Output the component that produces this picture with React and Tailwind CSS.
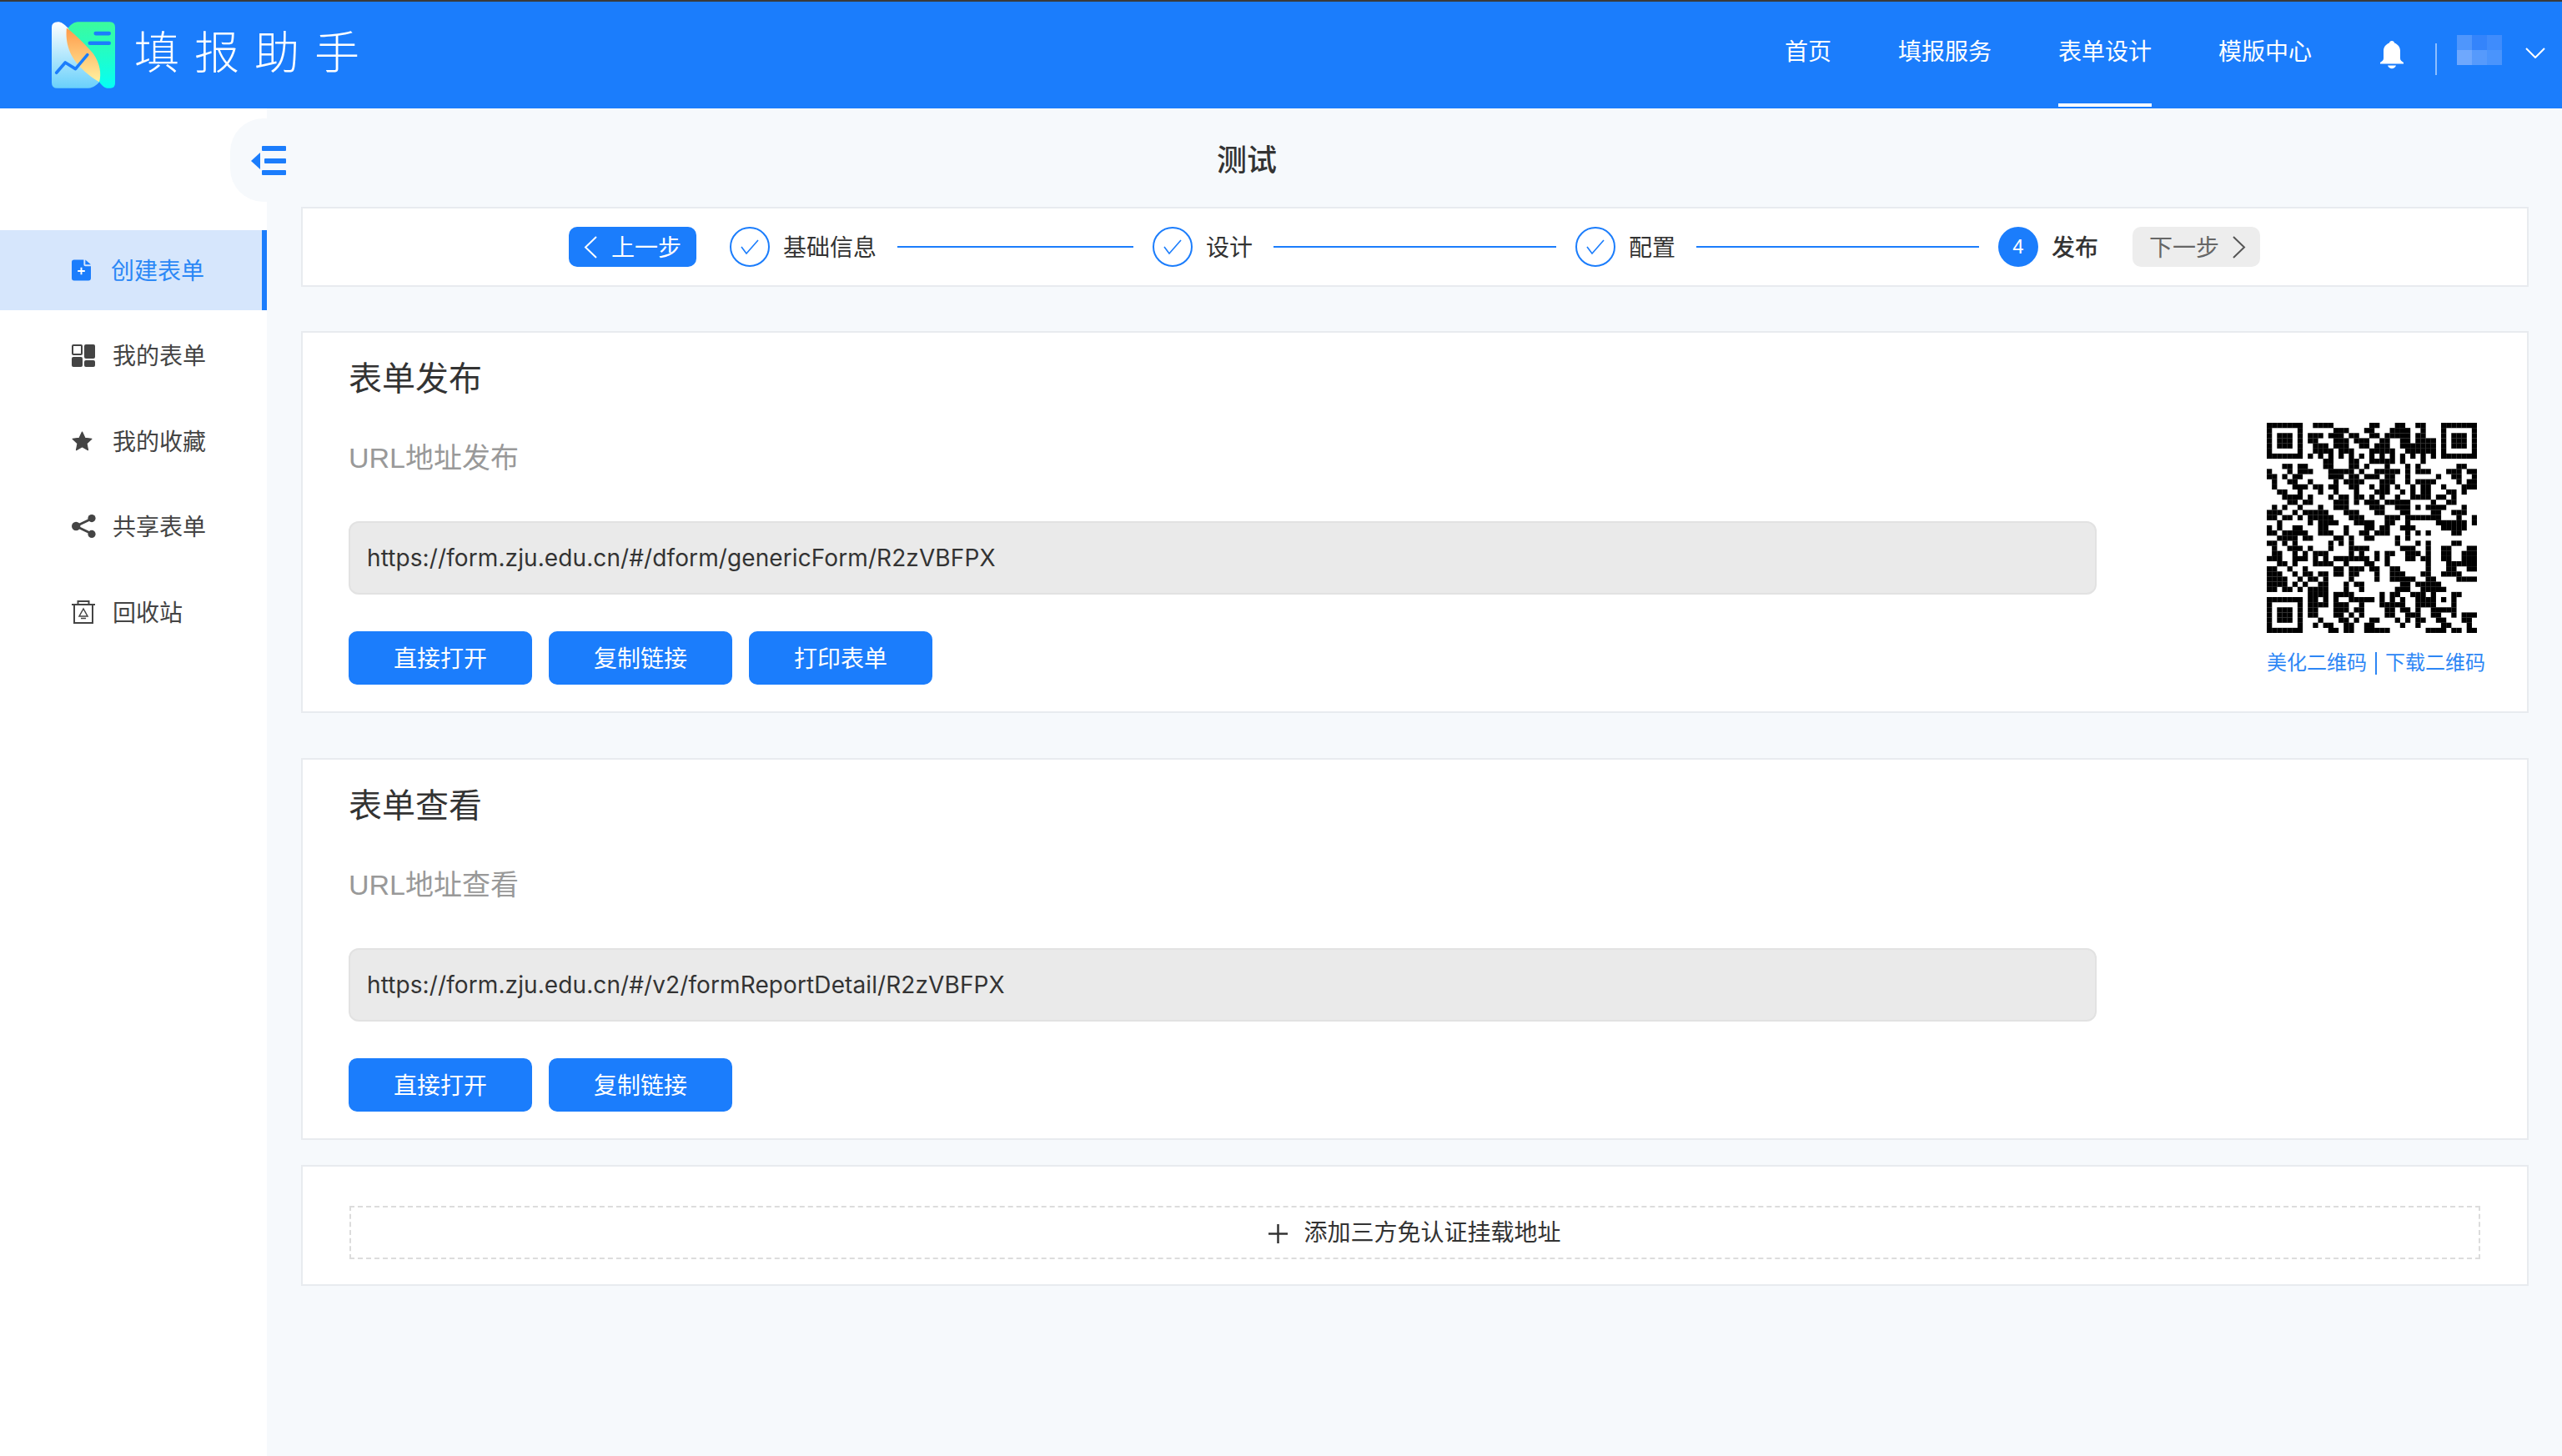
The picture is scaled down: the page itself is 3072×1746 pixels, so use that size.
import { Fragment } from "react";

const QR_ROWS = [
  "1111111 00 1111 0000000 11 000 11 00 11 000 1111111",
  "1000001 000000 111 000 11 000 1111 00 1 000 1000001",
  "1011101 0 111 0 111 0 11 00 11 0 11111 0 11 000 1011101",
  "1011101 0 11 000 111 0 111 00 11 00 11 0 1111 0 1011101",
  "1011101 00 111 0 111 00 11 0 111 00 1111111 0 1011101",
  "1000001 00 1111 0 111 000 11111 00 111111 0 1000001",
  "1111111 0 1010101010101010101010101 0 1111111",
  "00000000000 11 000 11 00 11111 0 1 000 1 0000000000",
  "000 11 0 11 000 11 000 11 0 1 000 1 000 1 0 1 0000000 11 00",
  "1 000 1 0 111 000 11111 0 1 00 11111 0 1 0 111 000 111 0 11",
  "11 0 1 0 11 00000 111 0 11 0 111 0 11 00 1 00000 1 00 11 00 1",
  "0 1 00 11 00 1 0000 1 0 1111 000 111 00 1 0 1111 0000 1 0 11",
  "0 1 000 111 0 11 0 11 00 11 00 1 0 11 0 1 00 1 0 11 00 1 000 111",
  "00 11 00 1 000 1 00 1 000 1 000 111 00 1 0 1 0 11 000 11 0 1 00",
  "000 1111 0 1 000 1 0 11 0 11 0 1 0 1 00 1 00 1111 0 11 0 1 0000",
  "0000 11 0 11 0000 111 0 1 0 111 0 11111 0000 1 00 11 0000",
  "0 1 0 1 00 1 000 1 00 111 0000 111 00 111 0 1 0 1111 000 1 00",
  "111 00 1 0 11111 000 111 000 11 000 11 0000 11 00 111 00",
  "11 0 11 0 1 0 11111 000 111 0000 111 0 1111111 000 1 00 1",
  "00 1 00000 1 0 1111 000 1111 00 11 00 1 00000 111111 0 1",
  "1 0 1 00 11 000 11 000 1 000 11 0 11 00 111 00000 11111 00",
  "11 0 11111 00 111 00 1 00 11 0 111 000 1 0 1 0 1 0000 11 000",
  "00 1111 0 11 0000 11 0 1 00 11 0000 1 0 1 0000000000000",
  "11 0 1 0 1 000000 1 0 1 0 1 00000000 1 000 1 0 1 0000 11 000",
  "0 1 00 111 0 1 000 1 000 1111 000000 111 00 1 00 11 000 11",
  "0 11 00 1 0 1 0 111 0000 1 0 1 00 1 0 11 00 111 0 1 00 11 00 111",
  "111 00 111 0 1 0 1 0 1111111 0 1 0 1 000 11 0 11 00 11 00 111",
  "00 11 0 1 000 1111 00 1 000 11 00 1 0000000 1 000 111111",
  "11 00 1 00 1 00000 11 0 111 0 11 00 11 00000 1 000 11 00 11",
  "111 00 1 0 11 0 11 0 11 0 11 000 1 00 111 000 11 00 1111 000",
  "1111 00 1 0 11 0 1 0000 1 0000 1 00 11111 00 11 0000 1111",
  "1111 0 1 0 1 00 11 000 1 0 11 0000000 11 0 11111 0000000",
  "11 0 11 0 1 0 1111 000 1 00 1 000000 111 00 11111 00 0000",
  "00000000 1111 0 1111 00000 1 0 11 00 111 0 1 000 1 1 000",
  "1111111 0 11 0 1 0 1 00 11111 0 1 0 1 0 1 00 111 1 0 1 0 1 0000",
  "1000001 0 1111 0 111 00 1 000 11111 00 111 1 000 1 0000",
  "1011101 0 11 000 111 0 11 0000 11 0 11 0 1 00 11111 0000",
  "1011101 0 11 000 11 0 1 0 1 0000 11 00 111 00 11 00 1 0 111",
  "1011101 000 1 000 11 0 1 00 11 000 1 0 1 0 11 00 11 000 11 0",
  "1000001 0 0 1 0 11 00 11 00 11 00000 1 00 1 0000 11 000 1 0",
  "1111111 00000 11 0 11 00 11111 0000000 1111 0 11 0 11",
].map((row) => row.replace(/ /g, ""));

const NAV = ["首页", "填报服务", "表单设计", "模版中心"];

function Logo() {
  return (
    <svg viewBox="0 0 229 240" className="w-[76px] h-[80px]">
      <defs>
        <linearGradient id="logoLeft" x1="0" y1="0" x2="0" y2="1">
          <stop offset="0" stopColor="#ffffff" />
          <stop offset="1" stopColor="#69d0fb" />
        </linearGradient>
        <linearGradient id="logoRight" x1="0" y1="0" x2="0" y2="1">
          <stop offset="0" stopColor="#3cfb9c" />
          <stop offset="1" stopColor="#05fff5" />
        </linearGradient>
        <linearGradient id="logoLeaf" x1="0" y1="0" x2="0" y2="1">
          <stop offset="0" stopColor="#ff9a4a" />
          <stop offset="1" stopColor="#fff19f" />
        </linearGradient>
      </defs>
      <path
        d="M22 0C35 0 45 8 59 22L172 217C160 232 145 240 125 240H20Q0 240 0 220V20Q0 0 22 0Z"
        fill="url(#logoLeft)"
      />
      <path
        d="M59 22C70 8 80 0 100 0H210Q229 0 229 20V222Q229 240 212 240H205C190 240 180 228 172 217Z"
        fill="url(#logoRight)"
      />
      <path
        d="M54 22C50 60 55 115 105 165C130 190 150 205 172 217C180 190 175 150 150 115C125 85 90 50 54 22Z"
        fill="url(#logoLeaf)"
      />
      <path
        d="M17 184L49 147L86 170L129 119"
        fill="none"
        stroke="#1b7dfc"
        strokeWidth="11"
        strokeLinecap="round"
        strokeLinejoin="round"
      />
      <path
        d="M159 42H207M138 77H207"
        fill="none"
        stroke="#1b7dfc"
        strokeWidth="14"
        strokeLinecap="round"
      />
    </svg>
  );
}

function QrCode() {
  return (
    <svg viewBox="0 0 41 41" className="w-[252px] h-[252px] block">
      {QR_ROWS.map((row, y) =>
        row.split("").map((cell, x) =>
          cell === "1" ? <rect key={x + "-" + y} x={x} y={y} width="1.02" height="1.02" fill="#000" /> : null
        )
      )}
    </svg>
  );
}

function CreateIcon() {
  return (
    <svg viewBox="0 0 24 26" className="w-[23px] h-[26px]">
      <path d="M3 0H15V6a2 2 0 0 0 2 2H24V23a3 3 0 0 1-3 3H3a3 3 0 0 1-3-3V3a3 3 0 0 1 3-3Z" fill="#1b7dfc" />
      <path d="M17 0L24 6H17Z" fill="#1b7dfc" />
      <path d="M12 9.5V18.5M7.5 14H16.5" stroke="#fff" strokeWidth="2" />
    </svg>
  );
}

function FormsIcon() {
  return (
    <svg viewBox="0 0 28 27" className="w-[28px] h-[27px]" fill="#444">
      <rect x="1" y="1" width="11" height="11" rx="1" fill="none" stroke="#444" strokeWidth="2" />
      <rect x="15" y="0" width="13" height="17" rx="2" />
      <rect x="0" y="15" width="13" height="12" rx="2" />
      <rect x="15" y="19" width="13" height="8" rx="2" />
    </svg>
  );
}

function StarIcon() {
  return (
    <svg viewBox="0 0 24 24" className="w-[25px] h-[24px]" fill="#444" stroke="#444" strokeWidth="1.2" strokeLinejoin="round">
      <path d="M12 1l3.4 7.3 8 1-5.9 5.5 1.5 7.9L12 18.8 5 22.7l1.5-7.9L.6 9.3l8-1z" />
    </svg>
  );
}

function ShareIcon() {
  return (
    <svg viewBox="0 0 29 28" className="w-[29px] h-[28px]" fill="#444">
      <path d="M5 14L24 5M5 14L24 23" stroke="#444" strokeWidth="3" />
      <circle cx="5.2" cy="14" r="5.2" />
      <circle cx="24" cy="4.6" r="4.6" />
      <circle cx="24" cy="23.4" r="4.6" />
    </svg>
  );
}

function TrashIcon() {
  return (
    <svg viewBox="0 0 28 28" className="w-[28px] h-[28px]" fill="none" stroke="#444" strokeWidth="2">
      <path d="M0 5H28M7.5 5V1H20.5V5M3 5V27H25V5" />
      <path d="M14 10L9 19H19ZM11 21.5H17" strokeWidth="1.5" />
    </svg>
  );
}

const MENU = [
  { label: "创建表单", icon: <CreateIcon />, active: true },
  { label: "我的表单", icon: <FormsIcon /> },
  { label: "我的收藏", icon: <StarIcon /> },
  { label: "共享表单", icon: <ShareIcon /> },
  { label: "回收站", icon: <TrashIcon /> },
];

function Sidebar() {
  return (
    <aside className="relative w-[320px] shrink-0 bg-white pt-[146px]">
      {/* collapse knob */}
      <div className="absolute left-[276px] top-[12px] w-[44px] h-[100px] rounded-l-[40px] bg-[#f6f9fc] flex items-center pl-[25px]">
        <svg viewBox="0 0 42 35" className="w-[42px] h-[35px] shrink-0" fill="#1b7dfc">
          <rect x="13" y="0" width="29" height="6" rx="1" />
          <rect x="16" y="15" width="26" height="6" rx="1" />
          <rect x="13" y="29" width="29" height="6" rx="1" />
          <path d="M0 18L11 8V28Z" />
        </svg>
      </div>
      {MENU.map((item) =>
        item.active ? (
          <div
            key={item.label}
            className="h-[96px] mb-[3px] flex items-center pl-[86px] bg-[#d6e6fc] border-r-[6px] border-[#1b7dfc] text-[#2b88f6] text-[28px]"
          >
            <span className="w-[47px] flex">{item.icon}</span>
            <span className="pt-[4px]">{item.label}</span>
          </div>
        ) : (
          <div key={item.label} className="h-[102.5px] flex items-center pl-[86px] text-[#444] text-[28px]">
            <span className="w-[49px] flex">{item.icon}</span>
            <span className="pt-[4px]">{item.label}</span>
          </div>
        )
      )}
    </aside>
  );
}

function Check() {
  return (
    <span className="w-[48px] h-[48px] rounded-full border-2 border-[#1b7dfc] flex items-center justify-center">
      <svg viewBox="0 0 22 18" className="w-[22px] h-[18px]" fill="none" stroke="#1b7dfc" strokeWidth="1.6">
        <path d="M1 9L7 17L21 1" />
      </svg>
    </span>
  );
}

const STEPS = [
  { label: "基础信息", line: "w-[283px]" },
  { label: "设计", line: "w-[339px]" },
  { label: "配置", line: "w-[339px]" },
];

function Stepper() {
  return (
    <div className="h-[96px] bg-white border-2 border-[#e8ebef] flex items-center pl-[319px]">
      <button className="w-[153px] h-[48px] rounded-[10px] bg-[#1b7dfc] text-white text-[28px] flex items-center pl-[18px]">
        <svg viewBox="0 0 16 27" className="w-[16px] h-[27px] mr-[17px]" fill="none" stroke="#fff" strokeWidth="2">
          <path d="M15 1L2 13.5L15 26" />
        </svg>
        <span className="pt-[3px]">上一步</span>
      </button>
      <span className="w-[40px]" />
      {STEPS.map((step) => (
        <Fragment key={step.label}>
          <Check />
          <span className="ml-[16px] pt-[3px] text-[28px] text-[#333]">{step.label}</span>
          <span className={"ml-[25px] mr-[23px] h-[2px] bg-[#1b7dfc] " + step.line} />
        </Fragment>
      ))}
      <span className="w-[48px] h-[48px] rounded-full bg-[#1b7dfc] text-white text-[24px] flex items-center justify-center">
        4
      </span>
      <span className="ml-[16px] pt-[3px] text-[28px] text-[#333] font-medium">发布</span>
      <button className="ml-[41px] w-[153px] h-[48px] rounded-[10px] bg-[#ededed] text-[#666] text-[28px] flex items-center pl-[20px]">
        <span className="pt-[3px]">下一步</span>
        <svg viewBox="0 0 16 27" className="w-[16px] h-[27px] ml-[16px]" fill="none" stroke="#555" strokeWidth="2">
          <path d="M1 1L14 13.5L1 26" />
        </svg>
      </button>
    </div>
  );
}

function FormCard({ title, sub, url, actions, side }) {
  return (
    <section className="bg-white border-2 border-[#e8ebef] flex h-[458px]">
      <div className="pl-[55px] pt-[27px] w-[2150px]">
        <h2 className="text-[40px] leading-[56px] text-[#333]">{title}</h2>
        <p className="mt-[43px] text-[34px] leading-[48px] text-[#999]">{sub}</p>
        <div className="mt-[52px] h-[88px] w-[2096px] rounded-[12px] bg-[#eaeaea] border-2 border-[#e2e2e2] flex items-center pl-[20px] font-['Inter',sans-serif] text-[28px] tracking-[0.1px] text-[#333]">
          {url}
        </div>
        <div className="mt-[44px] flex gap-[20px]">
          {actions.map((a) => (
            <button key={a} className="w-[220px] h-[64px] pt-[3px] rounded-[10px] bg-[#1b7dfc] text-white text-[28px]">
              {a}
            </button>
          ))}
        </div>
      </div>
      {side}
    </section>
  );
}

function QrSide() {
  return (
    <div className="ml-[205px] pt-[108px] w-[262px]">
      <QrCode />
      <div className="mt-[21px] flex items-center text-[24px] leading-[30px] text-[#2d86f5] whitespace-nowrap">
        美化二维码
        <span className="mx-[10px] w-[2px] h-[27px] bg-[#2d86f5]" />
        下载二维码
      </div>
    </div>
  );
}

export default function App() {
  return (
    <div className="w-[3072px] h-[1746px] overflow-hidden flex flex-col bg-[#f6f9fc] font-['Liberation_Sans','Noto_Sans_CJK_SC',sans-serif]">
      <header className="h-[130px] shrink-0 bg-[#1b7dfc] border-t-2 border-[#3a3a3a] flex items-center text-white">
        <div className="ml-[62px]">
          <Logo />
        </div>
        <span className="ml-[23px] mb-[5px] text-[54px] font-light tracking-[18px] leading-none">填报助手</span>
        <nav className="ml-auto h-full flex gap-[80px]">
          {NAV.map((n, i) => (
            <div key={n} className="relative h-full flex items-center pb-[6px] text-[28px]">
              {n}
              {i === 2 && <span className="absolute left-0 right-0 bottom-[2px] h-[4px] bg-white" />}
            </div>
          ))}
        </nav>
        <svg viewBox="0 0 28 34" className="ml-[82px] w-[28px] h-[34px]" fill="#fff">
          <path d="M14 0c1.7 0 3 1.2 3 2.6C21 4 24 7.5 24 12v9c0 2 1.5 3.5 4 5v1.5H0V26c2.5-1.5 4-3 4-5v-9c0-4.5 3-8 7-9.4C11 1.2 12.3 0 14 0Z" />
          <path d="M9 29.5h10c-1 2.5-3 3.8-5 3.8s-4-1.3-5-3.8Z" />
        </svg>
        <span className="ml-[38px] mt-[10px] w-[2px] h-[38px] bg-white/50" />
        <div className="ml-[24px] mb-[12px] grid grid-cols-3 w-[54px] h-[36px]">
          <span className="bg-[#4f96fc]" />
          <span className="bg-[#3484fb]" />
          <span className="bg-[#3f8cfc]" />
          <span className="bg-[#6fa8fd]" />
          <span className="bg-[#569afc]" />
          <span className="bg-[#4a94fc]" />
        </div>
        <svg viewBox="0 0 24 13" className="ml-[28px] mr-[20px] mb-[6px] w-[24px] h-[13px]" fill="none" stroke="#fff" strokeWidth="2">
          <path d="M1 1L12 12L23 1" />
        </svg>
      </header>

      <div className="flex-1 flex">
        <Sidebar />
        <main className="flex-1 pl-[41px] pr-[40px]">
          <div className="h-[118px] flex items-center pl-[1098px] pt-[8px] text-[36px] font-medium text-[#333]">测试</div>
          <Stepper />
          <div className="mt-[53px] flex flex-col gap-[54px]">
            <FormCard
              title="表单发布"
              sub="URL地址发布"
              url="https://form.zju.edu.cn/#/dform/genericForm/R2zVBFPX"
              actions={["直接打开", "复制链接", "打印表单"]}
              side={<QrSide />}
            />
            <FormCard
              title="表单查看"
              sub="URL地址查看"
              url="https://form.zju.edu.cn/#/v2/formReportDetail/R2zVBFPX"
              actions={["直接打开", "复制链接"]}
            />
          </div>
          <section className="mt-[30px] h-[145px] bg-white border-2 border-[#e8ebef] px-[56px] pt-[47px]">
            <div className="h-[64px] pt-[2px] border-2 border-dashed border-[#dcdcdc] flex items-center justify-center text-[28px] text-[#333]">
              <svg viewBox="0 0 23 23" className="w-[23px] h-[23px] mr-[19px]" fill="none" stroke="#333" strokeWidth="2.5">
                <path d="M11.5 0V23M0 11.5H23" />
              </svg>
              添加三方免认证挂载地址
            </div>
          </section>
        </main>
      </div>
    </div>
  );
}
